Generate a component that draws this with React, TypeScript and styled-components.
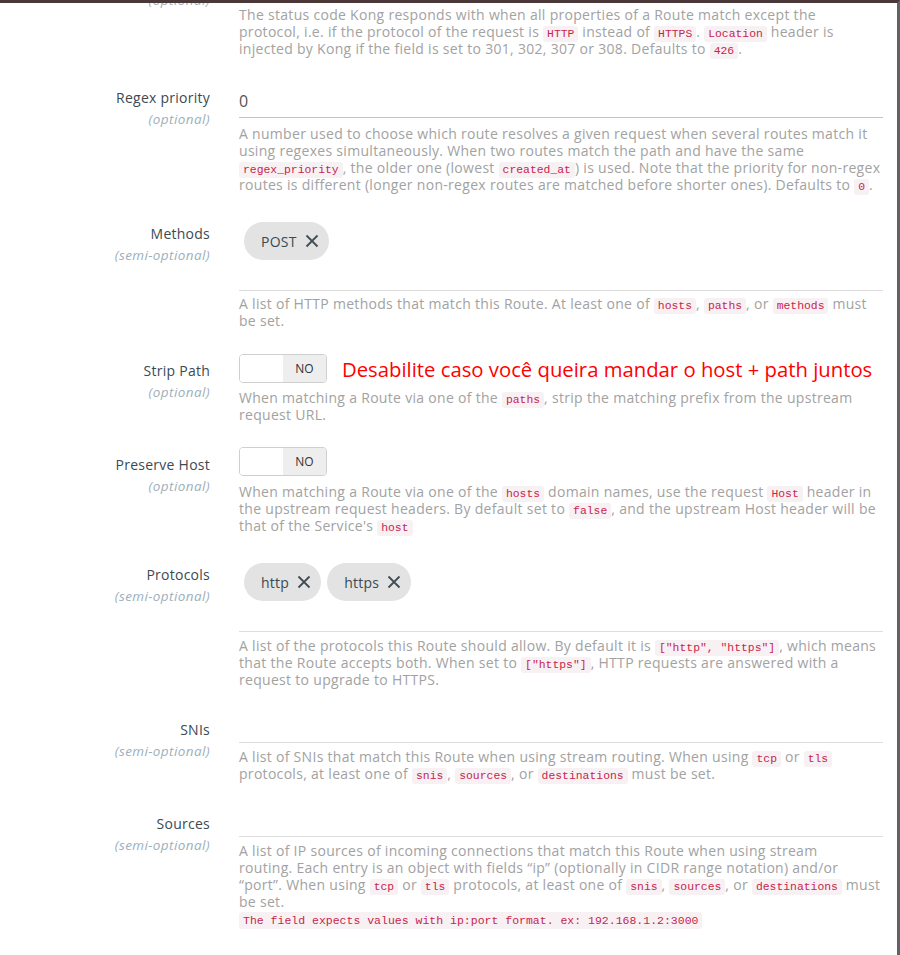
import React from "react";
import styled, { createGlobalStyle } from "styled-components";

const Global = createGlobalStyle`
  html, body { margin: 0; padding: 0; background: #fff; }
  body { font-family: "Open Sans", "Liberation Sans", sans-serif; overflow: hidden; }
`;

const Frame = styled.div`
  width: 900px;
  height: 955px;
  box-sizing: border-box;
  border-top: 3px solid #4b3838;
  border-right: 3px solid #626262;
  overflow: hidden;
  background: #fff;
`;

const Form = styled.div`
  margin-top: -34px;
  display: flex;
  flex-direction: column;
`;

const Row = styled.div<{ $gap: number }>`
  display: grid;
  grid-template-columns: 210px 644px;
  column-gap: 29px;
  margin-top: ${(p) => p.$gap}px;
`;

const LabelCol = styled.div<{ $top: number }>`
  text-align: right;
  padding-top: ${(p) => p.$top}px;
`;

const LabelName = styled.div`
  font-size: 14px;
  line-height: 18px;
  color: #3b4a53;
  letter-spacing: 0.25px;
`;

const LabelHint = styled.div`
  margin-top: 3px;
  font-size: 13.5px;
  line-height: 18px;
  font-style: italic;
  color: #9db0bb;
  letter-spacing: 0.4px;
`;

const Content = styled.div`
  display: flex;
  flex-direction: column;
  align-items: flex-start;
`;

const TextInput = styled.div`
  align-self: stretch;
  height: 29px;
  box-sizing: border-box;
  border-bottom: 1px solid #c4c4c4;
  font-size: 16px;
  line-height: 24px;
  color: #555;
`;

const TagBox = styled.div<{ $height: number }>`
  align-self: stretch;
  box-sizing: border-box;
  min-height: ${(p) => p.$height}px;
  border-bottom: 1px solid #dedede;
  padding-left: 5px;
`;

const Chips = styled.div`
  display: flex;
  gap: 6px;
`;

const Chip = styled.div`
  display: inline-flex;
  align-items: center;
  gap: 8px;
  height: 38px;
  padding: 0 10px 0 17px;
  border-radius: 19px;
  background: #e3e3e3;
  font-size: 14px;
  letter-spacing: 0.25px;
  color: #3a4a53;
`;

const ChipX = styled.svg`
  width: 14px;
  height: 14px;
  stroke: #3f4d55;
  stroke-width: 1.8;
  fill: none;
`;

const Desc = styled.div<{ $gap: number }>`
  margin-top: ${(p) => p.$gap}px;
  font-size: 14px;
  letter-spacing: 0.3px;
  line-height: 17px;
  color: #a2a2a2;
  white-space: nowrap;
`;

const Code = styled.code`
  font-family: "Liberation Mono", "DejaVu Sans Mono", monospace;
  font-size: 11.4px;
  line-height: 0;
  letter-spacing: 0;
  color: #c7254e;
  background: #f8f1f3;
  padding: 2px 4px;
  border-radius: 3px;
`;

const ErrorLine = styled.div`
  margin-top: 2px;
  font-family: "Liberation Mono", "DejaVu Sans Mono", monospace;
  font-size: 11.5px;
  line-height: 17px;
  color: #c7254e;
  background: #f8f1f3;
  padding: 0 4px;
  border-radius: 3px;
`;

const ToggleLine = styled.div`
  display: flex;
  align-items: center;
  gap: 15px;
  height: 29px;
`;

const Toggle = styled.div`
  display: flex;
  width: 88px;
  height: 29px;
  box-sizing: border-box;
  border: 1px solid #cfcfcf;
  border-radius: 4px;
  overflow: hidden;
  flex-shrink: 0;
`;

const ToggleKnob = styled.div`
  flex: 1;
  background: #fff;
`;

const ToggleState = styled.div`
  flex: 1;
  background: #eeeeee;
  display: flex;
  align-items: center;
  justify-content: center;
  font-size: 12px;
  color: #333;
`;

const Annotation = styled.div`
  font-family: "Open Sans", "DejaVu Sans", sans-serif;
  font-size: 20.3px;
  line-height: 26px;
  color: #ff0000;
  white-space: nowrap;
`;

type Piece = string | { c: string };
type Line = Piece[];

const c = (s: string) => ({ c: s });

function Description({ lines, gap }: { lines: Line[]; gap: number }) {
  return (
    <Desc $gap={gap}>
      {lines.map((line, i) => (
        <React.Fragment key={i}>
          {line.map((p, j) =>
            typeof p === "string" ? (
              <React.Fragment key={j}>{p}</React.Fragment>
            ) : (
              <Code key={j}>{p.c}</Code>
            )
          )}
          {i < lines.length - 1 && <br />}
        </React.Fragment>
      ))}
    </Desc>
  );
}

function X() {
  return (
    <ChipX viewBox="0 0 14 14">
      <path d="M1.5 1.5 L12.5 12.5 M12.5 1.5 L1.5 12.5" />
    </ChipX>
  );
}

function Label({ name, hint, top }: { name: string; hint: string; top: number }) {
  return (
    <LabelCol $top={top}>
      <LabelName>{name}</LabelName>
      <LabelHint>({hint})</LabelHint>
    </LabelCol>
  );
}

export default function App() {
  return (
    <>
      <Global />
      <Frame>
        <Form>
          <Row $gap={0}>
            <Label name="HTTPS Redirect Status Code" hint="optional" top={1} />
            <Content>
              <TextInput>426</TextInput>
              <Description
                gap={8}
                lines={[
                  ["The status code Kong responds with when all properties of a Route match except the"],
                  ["protocol, i.e. if the protocol of the request is ", c("HTTP"), " instead of ", c("HTTPS"), ". ", c("Location"), " header is"],
                  ["injected by Kong if the field is set to 301, 302, 307 or 308. Defaults to ", c("426"), "."],
                ]}
              />
            </Content>
          </Row>

          <Row $gap={32}>
            <Label name="Regex priority" hint="optional" top={0} />
            <Content>
              <TextInput>0</TextInput>
              <Description
                gap={7}
                lines={[
                  ["A number used to choose which route resolves a given request when several routes match it"],
                  ["using regexes simultaneously. When two routes match the path and have the same"],
                  [c("regex_priority"), ", the older one (lowest ", c("created_at"), ") is used. Note that the priority for non-regex"],
                  ["routes is different (longer non-regex routes are matched before shorter ones). Defaults to ", c("0"), "."],
                ]}
              />
            </Content>
          </Row>

          <Row $gap={29}>
            <Label name="Methods" hint="semi-optional" top={3} />
            <Content>
              <TagBox $height={69}>
                <Chips>
                  <Chip>POST <X /></Chip>
                </Chips>
              </TagBox>
              <Description
                gap={4}
                lines={[
                  ["A list of HTTP methods that match this Route. At least one of ", c("hosts"), ", ", c("paths"), ", or ", c("methods"), " must"],
                  ["be set."],
                ]}
              />
            </Content>
          </Row>

          <Row $gap={25}>
            <Label name="Strip Path" hint="optional" top={8} />
            <Content>
              <ToggleLine>
                <Toggle>
                  <ToggleKnob />
                  <ToggleState>NO</ToggleState>
                </Toggle>
                <Annotation>Desabilite caso você queira mandar o host + path juntos</Annotation>
              </ToggleLine>
              <Description
                gap={6}
                lines={[
                  ["When matching a Route via one of the ", c("paths"), ", strip the matching prefix from the upstream"],
                  ["request URL."],
                ]}
              />
            </Content>
          </Row>

          <Row $gap={24}>
            <Label name="Preserve Host" hint="optional" top={9} />
            <Content>
              <Toggle>
                <ToggleKnob />
                <ToggleState>NO</ToggleState>
              </Toggle>
              <Description
                gap={7}
                lines={[
                  ["When matching a Route via one of the ", c("hosts"), " domain names, use the request ", c("Host"), " header in"],
                  ["the upstream request headers. By default set to ", c("false"), ", and the upstream Host header will be"],
                  ["that of the Service's ", c("host")],
                ]}
              />
            </Content>
          </Row>

          <Row $gap={29}>
            <Label name="Protocols" hint="semi-optional" top={3} />
            <Content>
              <TagBox $height={69}>
                <Chips>
                  <Chip>http <X /></Chip>
                  <Chip>https <X /></Chip>
                </Chips>
              </TagBox>
              <Description
                gap={5}
                lines={[
                  ["A list of the protocols this Route should allow. By default it is ", c('["http", "https"]'), ", which means"],
                  ["that the Route accepts both. When set to ", c('["https"]'), ", HTTP requests are answered with a"],
                  ["request to upgrade to HTTPS."],
                ]}
              />
            </Content>
          </Row>

          <Row $gap={31}>
            <Label name="SNIs" hint="semi-optional" top={2} />
            <Content>
              <TagBox $height={24} />
              <Description
                gap={5}
                lines={[
                  ["A list of SNIs that match this Route when using stream routing. When using ", c("tcp"), " or ", c("tls")],
                  ["protocols, at least one of ", c("snis"), ", ", c("sources"), ", or ", c("destinations"), " must be set."],
                ]}
              />
            </Content>
          </Row>

          <Row $gap={31}>
            <Label name="Sources" hint="semi-optional" top={2} />
            <Content>
              <TagBox $height={24} />
              <Description
                gap={5}
                lines={[
                  ["A list of IP sources of incoming connections that match this Route when using stream"],
                  ["routing. Each entry is an object with fields \u201cip\u201d (optionally in CIDR range notation) and/or"],
                  ["\u201cport\u201d. When using ", c("tcp"), " or ", c("tls"), " protocols, at least one of ", c("snis"), ", ", c("sources"), ", or ", c("destinations"), " must"],
                  ["be set."],
                ]}
              />
              <ErrorLine>The field expects values with ip:port format. ex: 192.168.1.2:3000</ErrorLine>
            </Content>
          </Row>
        </Form>
      </Frame>
    </>
  );
}
